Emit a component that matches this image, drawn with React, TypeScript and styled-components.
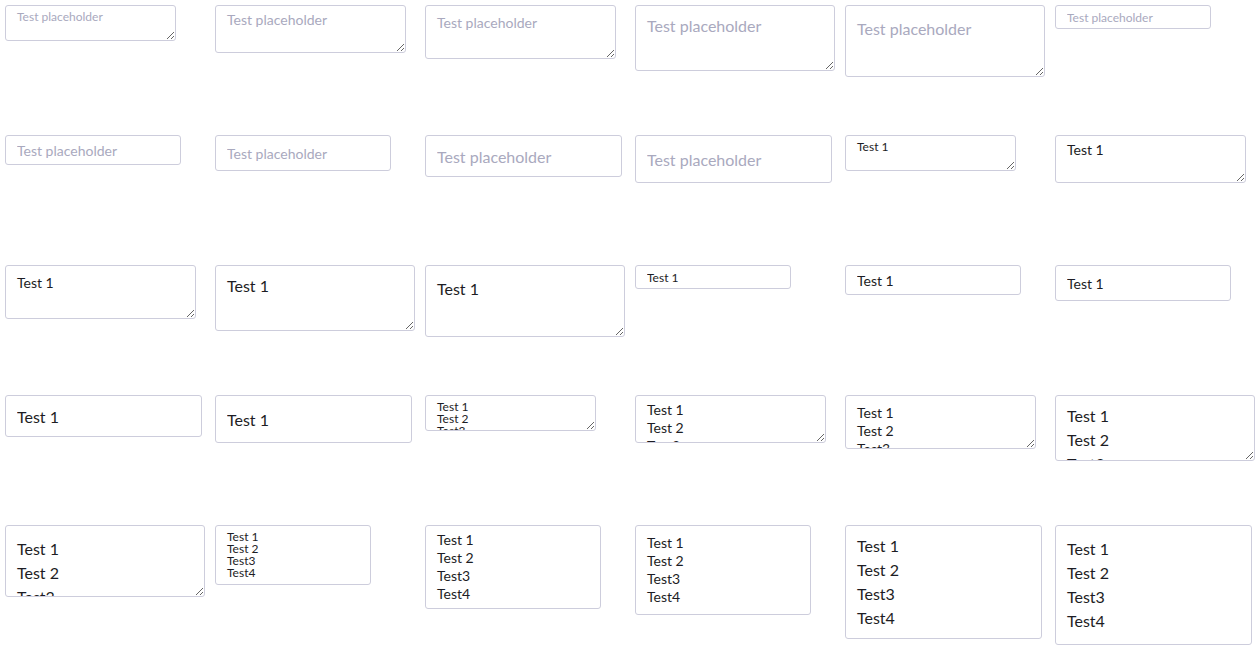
import React from 'react';
import styled, { createGlobalStyle, css } from 'styled-components';

type Size = 'xs' | 'sm' | 'md' | 'lg' | 'xl';

const sizes: Record<Size, { font: number; lh: number; pad: number; tw: number; iw: number }> = {
  xs: { font: 12, lh: 12, pad: 5, tw: 171, iw: 156 },
  sm: { font: 14, lh: 18, pad: 5, tw: 191, iw: 176 },
  md: { font: 14, lh: 18, pad: 8, tw: 191, iw: 176 },
  lg: { font: 16, lh: 24, pad: 8, tw: 200, iw: 197 },
  xl: { font: 16, lh: 24, pad: 11, tw: 200, iw: 197 },
};

const Global = createGlobalStyle`
  html, body { margin: 0; padding: 0; background: #ffffff; }
  body { font-family: "Lato", "Liberation Sans", sans-serif; }
`;

const Grid = styled.div`
  display: grid;
  grid-template-columns: repeat(6, 200px);
  grid-auto-rows: 120px;
  gap: 10px;
  padding: 5px;
  align-items: start;
  justify-items: start;
`;

const fieldBase = css<{ $size: Size }>`
  box-sizing: border-box;
  margin: 0;
  display: block;
  border: 1px solid #cdcddc;
  border-radius: 3px;
  background: #ffffff;
  color: #1d1d24;
  font-family: "Lato", "Liberation Sans", sans-serif;
  font-size: ${(p) => sizes[p.$size].font}px;
  line-height: ${(p) => sizes[p.$size].lh}px;
  padding: ${(p) => sizes[p.$size].pad}px 11px;
  outline: none;
  &::placeholder {
    color: #a9a9be;
    opacity: 1;
  }
`;

const Area = styled.textarea<{ $size: Size; $rows: number; $auto?: boolean }>`
  ${fieldBase};
  width: ${(p) => (p.$auto ? sizes[p.$size].iw : sizes[p.$size].tw)}px;
  height: ${(p) => p.$rows * sizes[p.$size].lh + sizes[p.$size].pad * 2 + 2}px;
  overflow: hidden;
  resize: ${(p) => (p.$auto ? 'none' : 'both')};
`;

const Field = styled.input<{ $size: Size }>`
  ${fieldBase};
  width: ${(p) => sizes[p.$size].iw}px;
  height: ${(p) => sizes[p.$size].lh + sizes[p.$size].pad * 2 + 2}px;
`;

const PH = 'Test placeholder';
const ONE = 'Test 1';
const MULTI = 'Test 1\nTest 2\nTest3\nTest4';

type Item =
  | { kind: 'area'; size: Size; value?: string; ph?: boolean }
  | { kind: 'input'; size: Size; value?: string; ph?: boolean }
  | { kind: 'auto'; size: Size; value: string };

const items: Item[] = [
  { kind: 'area', size: 'xs', ph: true },
  { kind: 'area', size: 'sm', ph: true },
  { kind: 'area', size: 'md', ph: true },
  { kind: 'area', size: 'lg', ph: true },
  { kind: 'area', size: 'xl', ph: true },
  { kind: 'input', size: 'xs', ph: true },
  { kind: 'input', size: 'sm', ph: true },
  { kind: 'input', size: 'md', ph: true },
  { kind: 'input', size: 'lg', ph: true },
  { kind: 'input', size: 'xl', ph: true },
  { kind: 'area', size: 'xs', value: ONE },
  { kind: 'area', size: 'sm', value: ONE },
  { kind: 'area', size: 'md', value: ONE },
  { kind: 'area', size: 'lg', value: ONE },
  { kind: 'area', size: 'xl', value: ONE },
  { kind: 'input', size: 'xs', value: ONE },
  { kind: 'input', size: 'sm', value: ONE },
  { kind: 'input', size: 'md', value: ONE },
  { kind: 'input', size: 'lg', value: ONE },
  { kind: 'input', size: 'xl', value: ONE },
  { kind: 'area', size: 'xs', value: MULTI },
  { kind: 'area', size: 'sm', value: MULTI },
  { kind: 'area', size: 'md', value: MULTI },
  { kind: 'area', size: 'lg', value: MULTI },
  { kind: 'area', size: 'xl', value: MULTI },
  { kind: 'auto', size: 'xs', value: MULTI },
  { kind: 'auto', size: 'sm', value: MULTI },
  { kind: 'auto', size: 'md', value: MULTI },
  { kind: 'auto', size: 'lg', value: MULTI },
  { kind: 'auto', size: 'xl', value: MULTI },
];

export default function App() {
  return (
    <>
      <Global />
      <Grid>
        {items.map((it, i) => {
          if (it.kind === 'input') {
            return (
              <Field
                key={i}
                $size={it.size}
                placeholder={it.ph ? PH : undefined}
                defaultValue={it.value}
                readOnly
              />
            );
          }
          if (it.kind === 'auto') {
            return <Area key={i} $size={it.size} $rows={4} $auto defaultValue={it.value} readOnly />;
          }
          return (
            <Area
              key={i}
              $size={it.size}
              $rows={2}
              placeholder={it.ph ? PH : undefined}
              defaultValue={it.value}
              readOnly
            />
          );
        })}
      </Grid>
    </>
  );
}
